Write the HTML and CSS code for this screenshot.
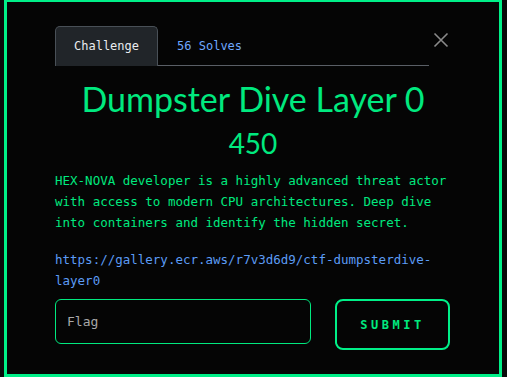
FILE: index.html
```html
<!DOCTYPE html>
<html lang="en">
<head>
  <meta charset="UTF-8">
  <meta name="viewport" content="width=device-width, initial-scale=1.0">
  <title>Dumpster Dive Layer 0</title>
  <link rel="stylesheet" href="styles.css">
</head>
<body>
  <div class="modal">
    <!-- Header with tabs -->
    <div class="modal-header">
      <ul class="tabs">
        <li class="tab active">Challenge</li>
        <li class="tab">56 Solves</li>
      </ul>
      <button class="close" aria-label="Close">
        <svg width="16" height="16" viewBox="0 0 16 16">
          <path d="M1.5 1.5 L14.5 14.5 M14.5 1.5 L1.5 14.5" stroke="#8a8a8a" stroke-width="1.6" fill="none"/>
        </svg>
      </button>
    </div>

    <h2 class="title">Dumpster Dive Layer 0</h2>
    <div class="points">450</div>

    <p class="description">HEX-NOVA developer is a highly advanced threat actor with access to modern CPU architectures. Deep dive into containers and identify the hidden secret.</p>
    <p class="description"><a href="#" class="link">https://gallery.ecr.aws/r7v3d6d9/ctf-dumpsterdive-layer0</a></p>

    <!-- Flag form -->
    <form class="flag-form">
      <input class="flag-input" type="text" placeholder="Flag">
      <button class="submit" type="button">SUBMIT</button>
    </form>
  </div>
</body>
</html>
```

FILE: styles.css
```css
body {
  margin: 0;
  background-color: #0a0a0a;
  font-family: "DejaVu Sans Mono", monospace;
  overflow: hidden;
}

.modal {
  box-sizing: border-box;
  width: 498px;
  height: 378px;
  margin: -1px 0 0 4px;
  border: 3px solid #00f088;
  background-color: #050505;
  padding: 24px 48px 0 48px;
}

.modal-header {
  display: flex;
  align-items: flex-start;
}

.tabs {
  flex: 1;
  display: flex;
  list-style: none;
  margin: 0;
  padding: 0;
  border-bottom: 1px solid #5a5f66;
}

.tab {
  padding: 10px 18px;
  font-size: 12px;
  line-height: 18px;
  color: #6ea8fe;
  border: 1px solid transparent;
  border-bottom: none;
  border-radius: 5px 5px 0 0;
  margin-bottom: -1px;
}

.tab.active {
  color: #e9ecef;
  background-color: #212529;
  border-color: #495057;
  padding-bottom: 11px;
}

.close {
  background: none;
  border: none;
  padding: 0;
  margin: 4px 0 0 2px;
  width: 20px;
  height: 20px;
  display: flex;
  align-items: center;
  justify-content: center;
  cursor: pointer;
}

.title {
  margin: 13px 0 0 0;
  text-align: center;
  font-family: Lato, "Open Sans", sans-serif;
  font-weight: normal;
  font-size: 34px;
  line-height: 40px;
  color: #00e97f;
}

.points {
  margin-top: 7px;
  text-align: center;
  font-family: Lato, "Open Sans", sans-serif;
  font-size: 28px;
  line-height: 34px;
  color: #00e97f;
}

.description {
  margin: 10px 0 0 0;
  font-size: 12.5px;
  line-height: 21px;
  color: #00e97f;
}

.description + .description {
  margin-top: 16px;
}

.link {
  color: #5c9cf5;
  text-decoration: none;
}

.flag-form {
  display: flex;
  gap: 24px;
  margin-top: 8px;
  align-items: flex-start;
}

.flag-input {
  box-sizing: border-box;
  width: 256px;
  height: 45px;
  background: transparent;
  border: 1px solid #00e97f;
  border-radius: 6px;
  padding: 0 11px;
  font-family: "DejaVu Sans Mono", monospace;
  font-size: 13px;
  color: #ddd;
}

.flag-input::placeholder {
  color: #a8a8a8;
}

.submit {
  box-sizing: border-box;
  width: 115px;
  height: 51px;
  background: transparent;
  border: 2px solid #00f088;
  border-radius: 8px;
  font-family: "DejaVu Sans Mono", monospace;
  font-weight: bold;
  font-size: 12px;
  letter-spacing: 3.5px;
  padding-left: 6px;
  color: #00e97f;
  cursor: pointer;
}
```
